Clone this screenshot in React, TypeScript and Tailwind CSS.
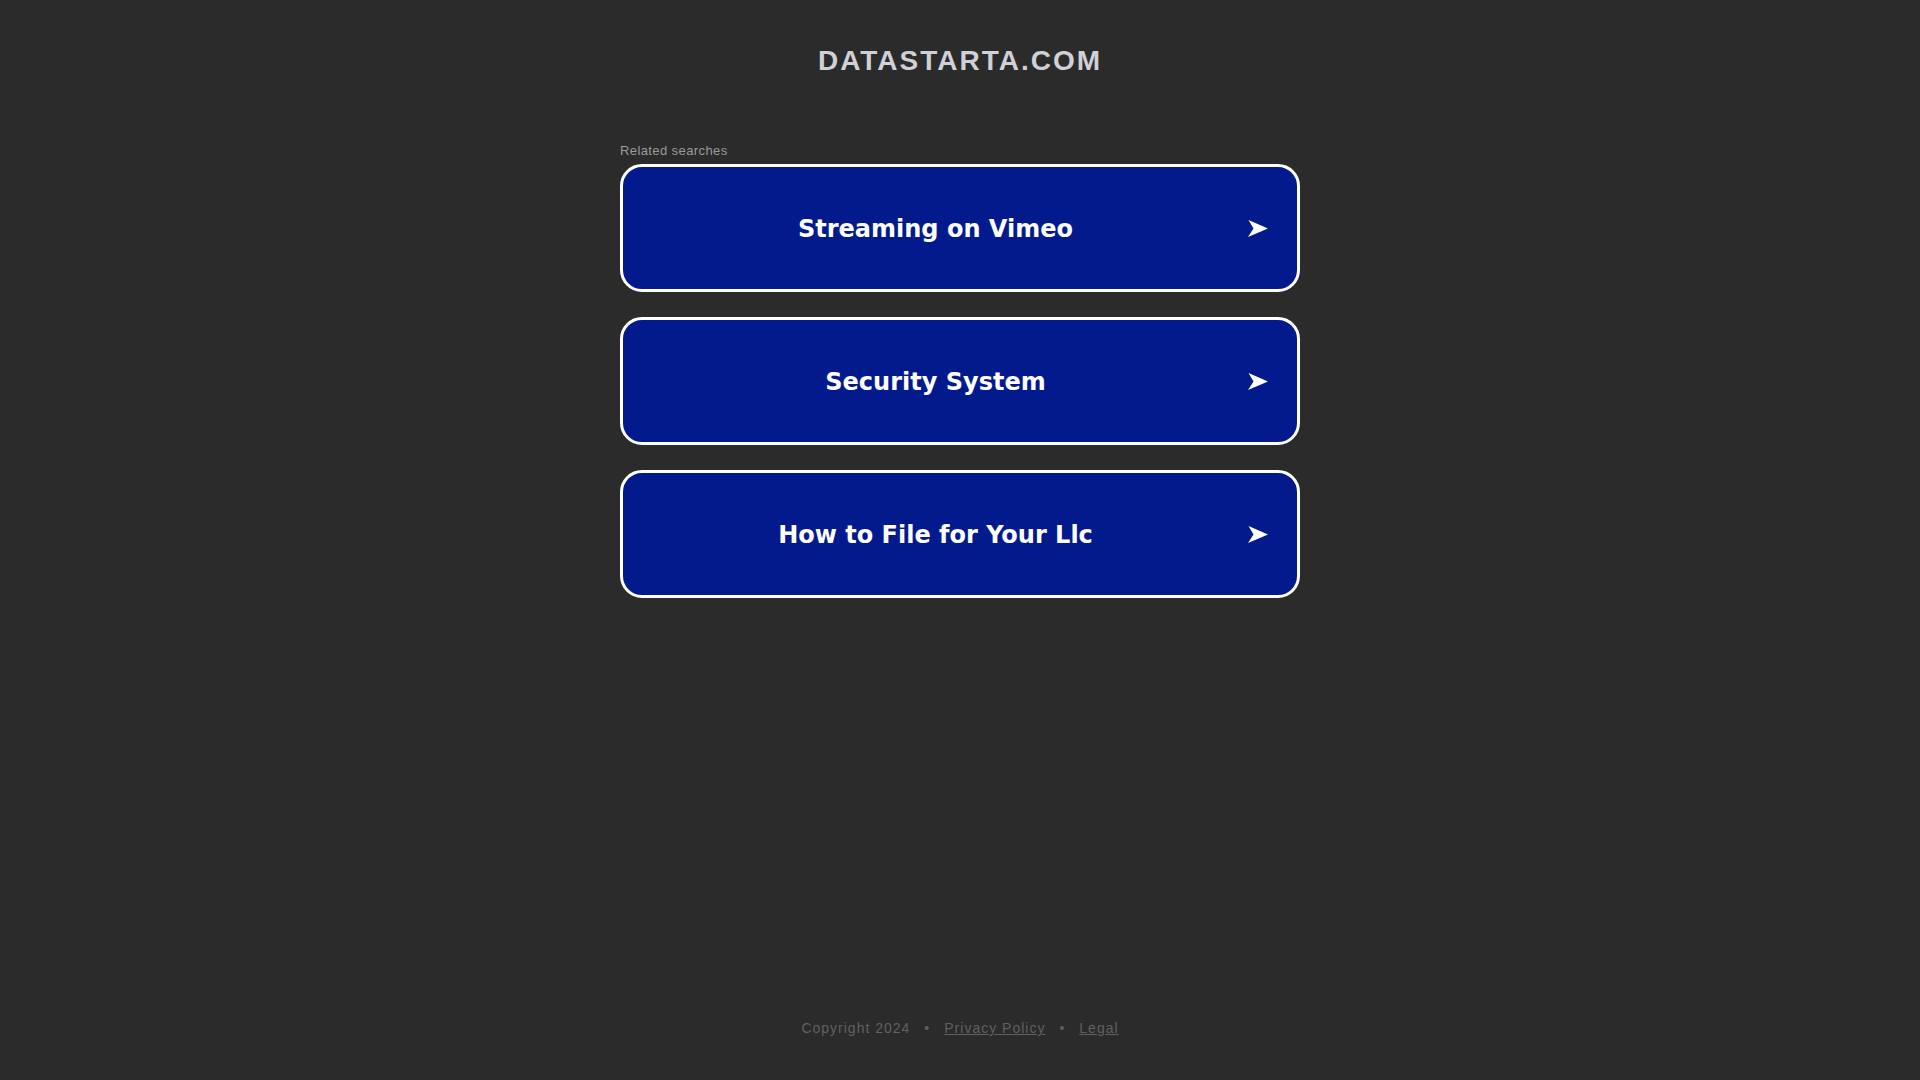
const searches = ['Streaming on Vimeo', 'Security System', 'How to File for Your Llc'];

const Arrow = () => (
  <svg viewBox="0 0 20 17" className="w-[20px] h-[17px] mr-[29px] shrink-0" fill="#ffffff">
    <polygon points="0.5,0 20,8.5 0,17 5.5,8.5" />
  </svg>
);

export default function App() {
  return (
    <div className="min-h-screen bg-[#2b2b2b] flex flex-col items-center font-['Liberation_Sans',Arial,sans-serif]">
      <h1 className="pt-[45px] text-[28px] leading-[32px] font-bold tracking-[2px] text-[#cfd0d8]">
        DATASTARTA.COM
      </h1>

      <div className="w-[680px] mt-[66px]">
        <div className="text-[13px] leading-[15px] tracking-[0.4px] text-[#9a9a9a] mb-[6px]">Related searches</div>
        <div className="flex flex-col gap-[25px]">
          {searches.map(s => (
            <a
              key={s}
              href="#"
              className="h-[128px] rounded-[22px] border-[3px] border-white bg-[#021a8b] flex items-center"
            >
              <span className="flex-1 text-center text-white text-[24px] font-bold pt-[2px] font-['DejaVu_Sans',Verdana,sans-serif]">
                {s}
              </span>
              <Arrow />
            </a>
          ))}
        </div>
      </div>

      <footer className="mt-auto pb-[44px] flex items-center gap-[14px] text-[14px] leading-[16px] tracking-[1px] text-[#606060]">
        <span>Copyright 2024</span>
        <span>•</span>
        <a href="#" className="underline">Privacy Policy</a>
        <span>•</span>
        <a href="#" className="underline">Legal</a>
      </footer>
    </div>
  );
}
